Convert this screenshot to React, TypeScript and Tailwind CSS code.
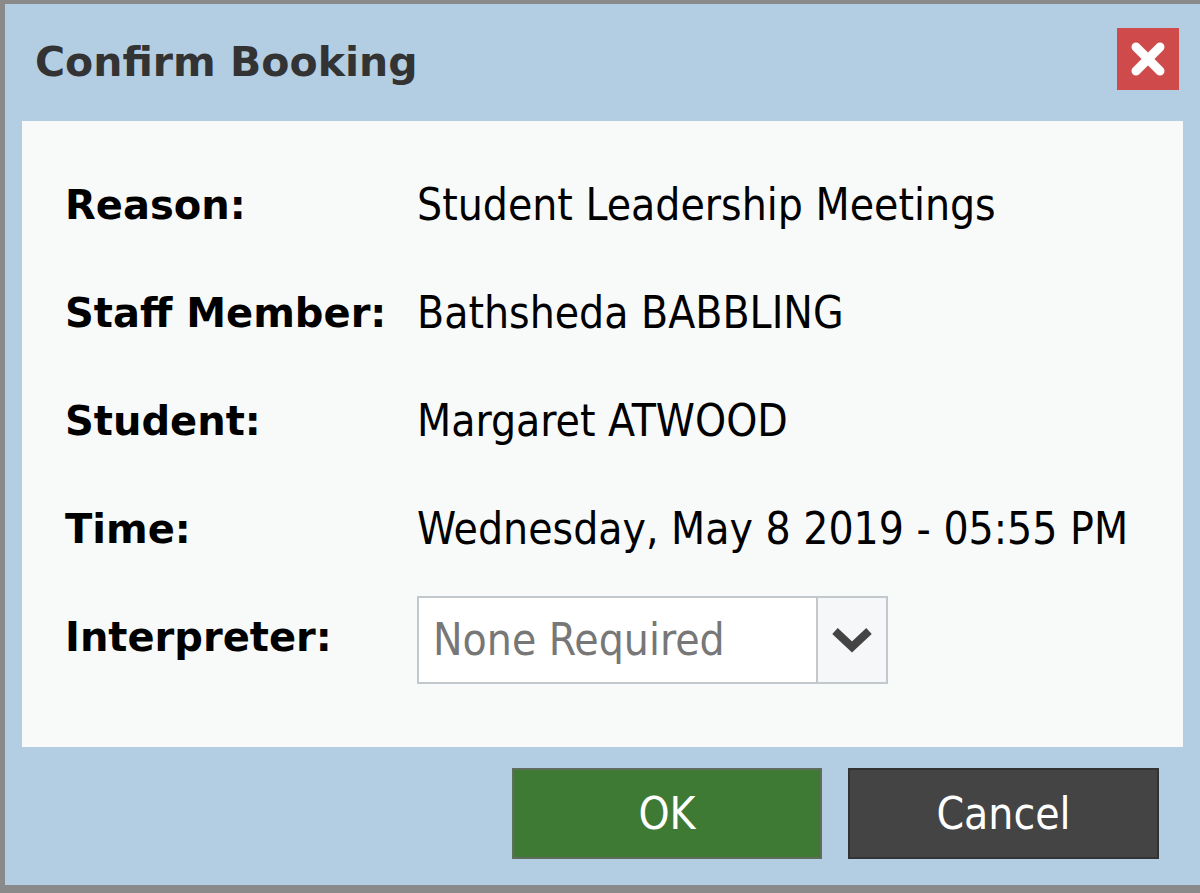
import { X } from 'lucide-react'

const rows = [
  { label: 'Reason:', value: 'Student Leadership Meetings' },
  { label: 'Staff Member:', value: 'Bathsheda BABBLING' },
  { label: 'Student:', value: 'Margaret ATWOOD' },
  { label: 'Time:', value: 'Wednesday, May 8 2019 - 05:55 PM' },
]

const valueFont = "font-['DejaVu_Sans_Condensed','DejaVu_Sans',sans-serif] font-stretch-condensed"

export default function App() {
  return (
    <div className="w-[1200px] h-[893px] bg-[#8a8a8a] pt-[4px] pl-[5px] pb-[8px] overflow-hidden">
      <div className="h-full flex flex-col bg-[#b3cde2]">
        {/* title bar */}
        <div className="h-[117px] shrink-0 flex items-center justify-between pl-[30px] pr-[21px]">
          <h1 className="font-['DejaVu_Sans',sans-serif] font-bold text-[41px] leading-none text-[#333333]">
            Confirm Booking
          </h1>
          <button className="w-[62px] h-[62px] mb-[8px] bg-[#cf4a4b] flex items-center justify-center">
            <X className="w-[48px] h-[48px] text-white" strokeWidth={4.5} />
          </button>
        </div>

        {/* body */}
        <div className="h-[626px] shrink-0 mx-[17px] bg-[#f8f9f9] pt-[30px] pl-[43px]">
          <div className="grid grid-cols-[352px_1fr] auto-rows-[108px] items-center">
            {rows.map((r) => (
              <div key={r.label} className="contents">
                <div className="font-['DejaVu_Sans',sans-serif] font-bold text-[40px] leading-none text-black">
                  {r.label}
                </div>
                <div className={`${valueFont} text-[44px] leading-none text-black whitespace-nowrap`}>
                  {r.value}
                </div>
              </div>
            ))}
            <div className="font-['DejaVu_Sans',sans-serif] font-bold text-[40px] leading-none text-black">
              Interpreter:
            </div>
            <div className="flex mt-[6px]">
              <div className="w-[471px] h-[88px] flex border-2 border-[#c3c8cd] bg-white">
                <div className={`flex-1 flex items-center pl-[14px] ${valueFont} text-[44px] leading-none text-[#777777]`}>
                  None Required
                </div>
                <div className="w-[70px] flex items-center justify-center border-l-2 border-[#c3c8cd] bg-[#f6f7f8]">
                  <svg width="44" height="28" viewBox="0 0 44 28" fill="none">
                    <path d="M5 5 L22 21 L39 5" stroke="#444444" strokeWidth="8" strokeLinejoin="miter" />
                  </svg>
                </div>
              </div>
            </div>
          </div>
        </div>

        {/* footer */}
        <div className="flex justify-end gap-[26px] pt-[21px] pr-[41px]">
          <button className={`w-[310px] h-[91px] bg-[#3e7a34] border-2 border-[#5f6e5c] text-white ${valueFont} text-[44px] leading-none`}>
            OK
          </button>
          <button className={`w-[311px] h-[91px] bg-[#444444] border-2 border-[#333333] text-white ${valueFont} text-[44px] leading-none`}>
            Cancel
          </button>
        </div>
      </div>
    </div>
  )
}
